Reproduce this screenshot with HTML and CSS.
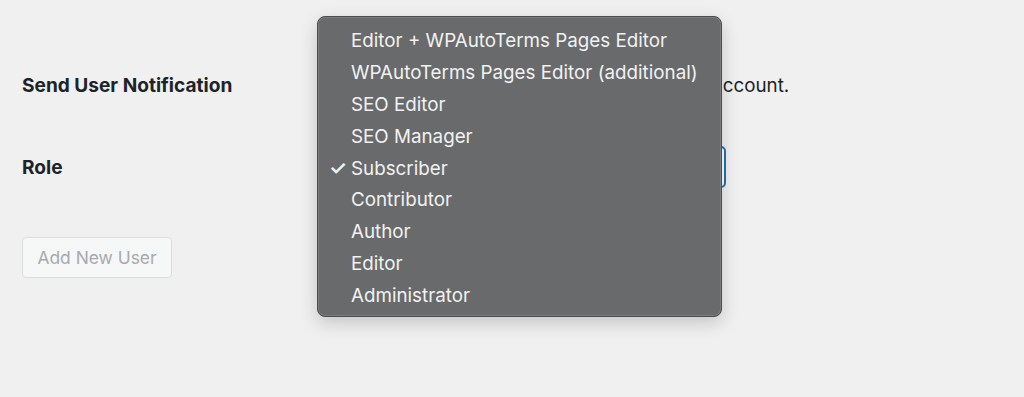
FILE: index.html
```html
<!DOCTYPE html>
<html lang="en">

<head>
    <meta charset="UTF-8">
    <meta name="viewport" content="width=device-width, initial-scale=1.0">
    <title>Add New User</title>
    <link rel="stylesheet" href="styles.css">
</head>

<body>

    <div class="wrap">
        <table class="form-table">
            <tr class="row-notify">
                <th>Send User Notification</th>
                <td>
                    <label class="notify-label">
                        <input type="checkbox" checked>
                        Send the new user an email about their account.
                    </label>
                </td>
            </tr>
            <tr class="row-role">
                <th>Role</th>
                <td>
                    <div class="role-select">Subscriber</div>
                </td>
            </tr>
        </table>

        <button type="button" class="btn-add" disabled>Add New User</button>
    </div>

    <!-- native select popup, open over the form -->
    <ul class="select-menu">
        <li>Editor + WPAutoTerms Pages Editor</li>
        <li>WPAutoTerms Pages Editor (additional)</li>
        <li>SEO Editor</li>
        <li>SEO Manager</li>
        <li class="checked">Subscriber</li>
        <li>Contributor</li>
        <li>Author</li>
        <li>Editor</li>
        <li>Administrator</li>
    </ul>

</body>

</html>
```

FILE: styles.css
```css
body {
    font-family: 'Inter', 'Liberation Sans', sans-serif;
    background-color: #f0f0f1;
    color: #1d2327;
    margin: 0;
    height: 397px;
    overflow: hidden;
}

.wrap {
    padding: 0 22px;
}

.form-table {
    border-collapse: collapse;
    margin-top: 64px;
}

.form-table th {
    width: 311px;
    text-align: left;
    font-size: 19.1px;
    font-weight: 650;
    padding: 0;
    vertical-align: middle;
}

.form-table td {
    padding: 0;
    font-size: 18.8px;
}

.row-notify th,
.row-notify td {
    height: 42px;
}

.row-role th,
.row-role td {
    height: 42px;
    padding-top: 40px;
}

.notify-label {
    display: flex;
    align-items: center;
    gap: 8px;
    white-space: nowrap;
}

.role-select {
    width: 384px;
    height: 42px;
    border: 2px solid #2271b1;
    border-radius: 5px;
    background-color: #fff;
    padding: 0 12px;
    box-sizing: border-box;
    line-height: 38px;
    margin-left: 9px;
}

.btn-add {
    margin-top: 49px;
    width: 150px;
    height: 41px;
    font-family: inherit;
    font-size: 17.4px;
    color: #a7aaad;
    background-color: #f6f7f7;
    border: 1px solid #dcdcde;
    border-radius: 4px;
}

.select-menu {
    position: absolute;
    left: 317px;
    top: 16px;
    width: 405px;
    height: 301px;
    box-sizing: border-box;
    margin: 0;
    padding: 8px 0 5px 0;
    list-style: none;
    background-color: #686a6b;
    border: 1px solid #4a4c4d;
    border-radius: 8px;
    box-shadow: 0 6px 18px rgba(0, 0, 0, 0.18), inset 0 0 0 1px rgba(255, 255, 255, 0.12);
}

.select-menu li {
    position: relative;
    height: 31.9px;
    line-height: 31.9px;
    padding-left: 33px;
    font-size: 18.8px;
    color: #f2f2f2;
    white-space: nowrap;
}

.select-menu li.checked::before {
    content: "\2713";
    position: absolute;
    left: 11px;
    font-size: 20px;
    font-weight: 600;
}
```
